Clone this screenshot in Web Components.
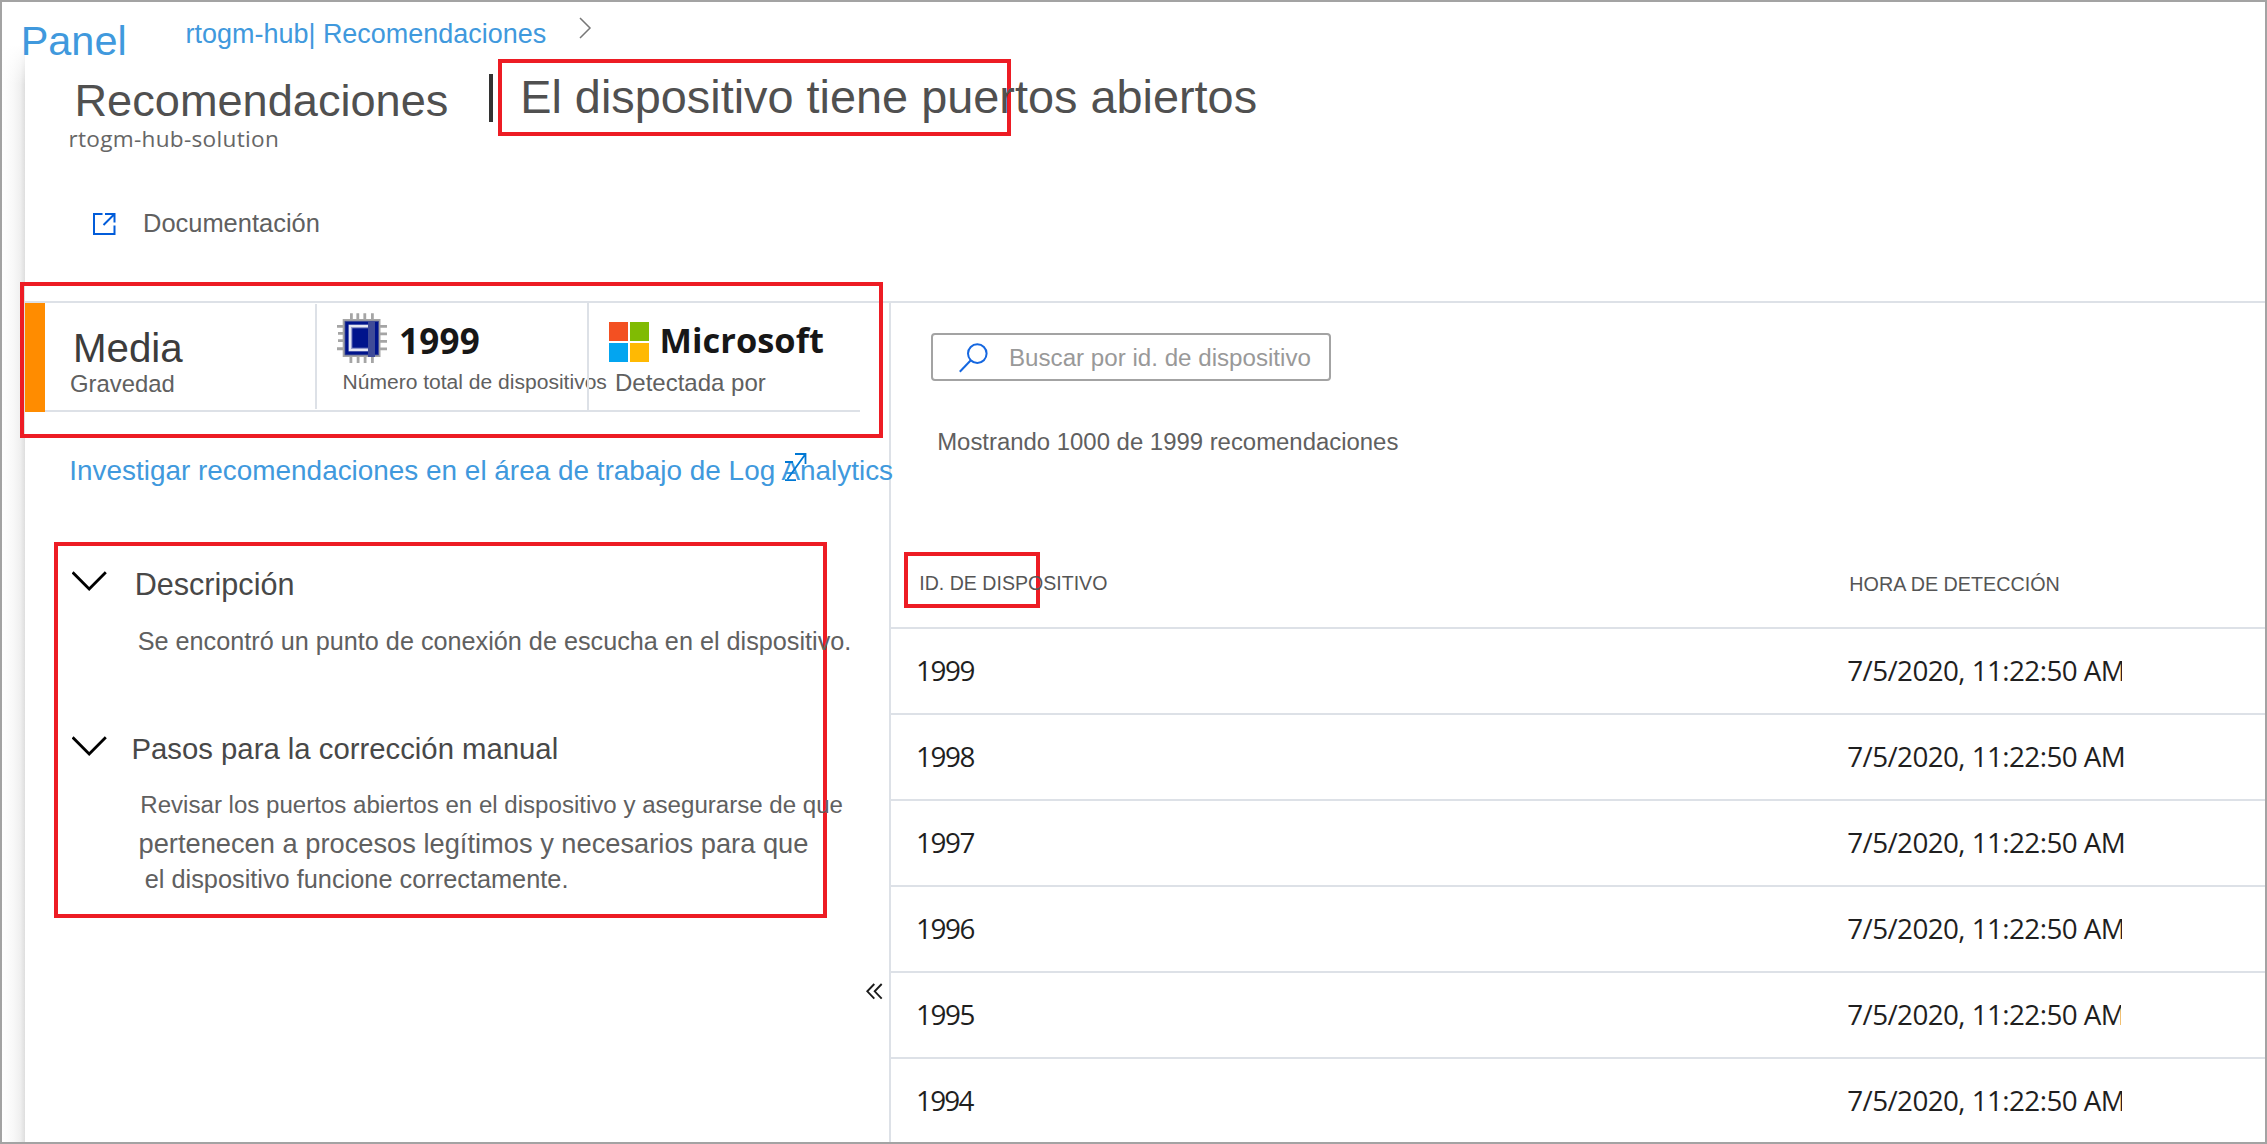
<!DOCTYPE html>
<html lang="es">
<head>
<meta charset="utf-8">
<title>Recomendaciones</title>
<style>
html, body { margin: 0; padding: 0; background: #fff; }
body { width: 2267px; height: 1144px; overflow: hidden; font-family: "Liberation Sans", Arial, sans-serif; }
</style>
</head>
<body>
<app-frame></app-frame>
<script>
const pen = document.createElement('canvas').getContext('2d');

/* One line of text whose inked width is `w`; its baseline lies `size` px below the top of its box.
   The sans face adapts its font size, the "open-sans" variant adapts its letter spacing. */
class FitText extends HTMLElement {
  connectedCallback() {
    if (this.shadowRoot) return;
    const root = this.attachShadow({ mode: 'open' });
    root.innerHTML = `<style>
      :host { display: block; flex: none; white-space: nowrap; }
      span { display: block; white-space: nowrap; }
    </style><span><slot></slot></span>`;
    const text = this.textContent;
    const w = parseFloat(this.getAttribute('w'));
    const base = parseFloat(this.getAttribute('size'));
    const open = this.hasAttribute('open-sans');
    const family = open ? '"Open Sans", "Noto Sans", sans-serif' : '"Liberation Sans", Arial, sans-serif';
    const weight = this.getAttribute('weight') || '400';
    const measure = s => { pen.font = `${weight} ${s}px ${family}`; return pen.measureText(text); };
    let size = base, m = measure(size), spacing = 0;
    let ink = m.actualBoundingBoxLeft + m.actualBoundingBoxRight;
    if (open) spacing = (w - ink) / (text.length - 1);
    else { size = base * w / ink; m = measure(size); }
    const lead = 2 * base - Math.round(m.fontBoundingBoxAscent) + Math.round(m.fontBoundingBoxDescent);
    this.style.width = w + 'px';
    const span = root.querySelector('span');
    span.style.cssText = `font:${weight} ${size}px/${lead}px ${family};letter-spacing:${spacing}px;margin-left:${m.actualBoundingBoxLeft}px`;
  }
}
customElements.define('fit-text', FitText);

const define = (tag, html) => {
  const tpl = document.createElement('template');
  tpl.innerHTML = html;
  customElements.define(tag, class extends HTMLElement {
    constructor() {
      super();
      this.attachShadow({ mode: 'open' }).append(document.importNode(tpl.content, true));
    }
  });
};

define('mark-box', `<style>
  :host { display: block; box-sizing: border-box; border: 4px solid #ed1c24; flex: none; }
</style><slot></slot>`);

define('icon-open', `<style>:host{display:block;flex:none} svg{display:block}</style>
<svg width="23" height="22" viewBox="0 0 23 22" fill="none" stroke="#015cda" stroke-width="2">
<path d="M9.5 1H1V21H21.5V12.5M12 1H21.5V9.5M21 1.5L10.5 12"/></svg>`);

define('icon-goto', `<style>:host{display:block} svg{display:block}</style>
<svg width="22" height="29" viewBox="0 0 22 29" fill="none" stroke="#0078d4" stroke-width="1.8">
<path d="M10 1H20.5V11M20.5 1L2.5 26M0 9H8M0 27.2H11"/></svg>`);

define('icon-chip', `<style>:host{display:block;flex:none} svg{display:block}</style>
<svg width="50" height="50" viewBox="7 7 50 50">
<g fill="#a5a5a5">
<path d="M20 7.3h2.8v6H20zM26.4 7.3h2.8v6h-2.8zM33.4 7.3h2.8v6h-2.8zM41 7.3h2.8v6H41z"/>
<path d="M19.5 50.5h2.8V57h-2.8zM26.7 50.5h2.8V57h-2.8zM33.7 50.5h2.8V57h-2.8zM41 50.5h2.8V57H41z"/>
<path d="M7 19h6v2.8H7zM8 26h5v2.8H8zM8 33.2h5V36H8zM7 41.2h6v3H7z"/>
<path d="M50 19h7v2.8h-7zM50 26.4h7v2.8h-7zM50 34h7v2.8h-7zM50 41.4h7v2.8h-7z"/>
<rect x="12.7" y="13" width="37.8" height="38"/></g>
<rect x="15" y="15.3" width="33.5" height="33.6" fill="#00148c" stroke="#3f4a96" stroke-width=".8"/>
<path d="M38 20.3H20.4V43.7H38" fill="none" stroke="#8f97cb" stroke-width="3.8"/>
<path d="M38 20H20V44H38" fill="none" stroke="#e4e6f2" stroke-width="2.2"/>
<rect x="38" y="15" width="7" height="36" fill="#3f4b98"/></svg>`);

define('icon-windows', `<style>
  :host { display: grid; grid-template-columns: 19px 19px; grid-template-rows: 19px 19px; gap: 2px; flex: none; }
</style><i style="background:#f35022"></i><i style="background:#80bb03"></i><i style="background:#03a5f0"></i><i style="background:#ffb903"></i>`);

define('icon-search', `<style>:host{display:block;flex:none} svg{display:block}</style>
<svg width="30" height="30" viewBox="0 0 30 30" fill="none" stroke="#1567e0" stroke-width="2">
<circle cx="18.3" cy="10.6" r="9.3"/><path d="M11.8 17.2L.8 28.8"/></svg>`);

define('icon-down', `<style>:host{display:block;flex:none} svg{display:block}</style>
<svg width="36" height="21" viewBox="0 0 36 21" fill="none" stroke="#000" stroke-width="2.8"><path d="M.6 1.3L17.2 18L33.8 1.3"/></svg>`);

define('crumb-bar', `<style>
  :host { display: flex; align-items: flex-start; height: 43px; padding-left: 21.7px; flex: none; color: #4099dd; position: relative; z-index: 1; }
  svg { display: block; margin: 15px 0 0 33.5px; }
</style>
<fit-text size="41" w="100.8" style="margin-top:12px">Panel</fit-text>
<fit-text size="27" w="359.5" style="margin:13.7px 0 0 62px">rtogm-hub| Recomendaciones</fit-text>
<svg width="13" height="22" viewBox="0 0 13 22" fill="none" stroke="#777" stroke-width="1.5"><path d="M1 1L11 11L1 21"/></svg>`);

define('blade-head', `<style>
  :host { display: block; height: 256px; flex: none; color: #505050; }
  .title { display: flex; align-items: flex-start; height: 80px; padding-left: 52.5px; }
  .bar { width: 4px; height: 48px; margin: 29px 0 0 41.5px; background: #333; }
  mark-box { width: 513px; height: 77px; margin: 14px 0 0 5.5px; padding: 4.2px 0 0 21.2px; }
  .sub { margin: 0 0 0 44.4px; color: #666; height: 83px; }
  .doc { display: flex; align-items: flex-start; padding-left: 68px; color: #606060; }
  .doc icon-open { margin-top: 5px; }
</style>
<div class="title">
  <fit-text size="45" w="369.5" style="margin-top:25.7px">Recomendaciones</fit-text>
  <div class="bar"></div>
  <mark-box><fit-text size="46.5" w="732.8">El dispositivo tiene puertos abiertos</fit-text></mark-box>
</div>
<div class="sub"><fit-text open-sans size="22.6" w="208.5">rtogm-hub-solution</fit-text></div>
<div class="doc"><icon-open></icon-open><fit-text size="25" w="174" style="margin:-.7px 0 0 29px">Documentación</fit-text></div>`);

define('stat-strip', `<style>
  :host { display: flex; height: 109px; position: relative; }
  .tone { width: 20px; background: #ff8c00; flex: none; }
  .cells { display: flex; width: 815px; box-sizing: border-box; border-bottom: 2px solid #dde1e7; }
  .cell { width: 270px; flex: none; }
  .rule { width: 2px; background: #dde1e7; flex: none; height: 105px; margin-top: 1px; }
  .rule.tall { height: 107px; margin-top: 0; }
  .row { display: flex; align-items: flex-start; height: 60px; }
  .cap { color: #606060; }
  .num { color: #171717; }
  mark-box { position: absolute; left: -5px; top: -21px; width: 863px; height: 156px; }
</style>
<div class="tone"></div>
<div class="cells">
  <div class="cell">
    <div class="row"><fit-text size="41" w="107" style="margin:18.2px 0 0 31px;color:#3c3c3c">Media</fit-text></div>
    <fit-text class="cap" size="24" w="102.5" style="margin:5px 0 0 26px">Gravedad</fit-text>
  </div>
  <div class="rule"></div>
  <div class="cell">
    <div class="row"><icon-chip style="margin:10px 0 0 20px"></icon-chip>
    <fit-text open-sans weight="700" class="num" size="35" w="77.7" style="margin:15.8px 0 0 14px">1999</fit-text></div>
    <fit-text class="cap" size="21" w="263" style="margin:5px 0 0 26.5px">Número total de dispositivos</fit-text>
  </div>
  <div class="rule tall"></div>
  <div class="cell">
    <div class="row"><icon-windows style="margin:19px 0 0 20px"></icon-windows>
    <fit-text open-sans weight="700" class="num" size="34.4" w="160.4" style="margin:15.7px 0 0 13.6px">Microsoft</fit-text></div>
    <fit-text class="cap" size="23.5" w="150" style="margin:4.5px 0 0 27px">Detectada por</fit-text>
  </div>
</div>
<mark-box></mark-box>`);

define('log-link', `<style>
  :host { display: block; position: relative; color: #4099dd; height: 36px; z-index: 1; }
  icon-goto { position: absolute; left: 714px; top: .5px; }
</style><fit-text size="27.5" w="823">Investigar recomendaciones en el área de trabajo de Log Analytics</fit-text><icon-goto></icon-goto>`);

define('fold-section', `<style>
  :host { display: block; color: #606060; }
  .head { display: flex; align-items: flex-start; color: #484848; height: 40px; }
</style><div class="head"><icon-down></icon-down><slot name="title"></slot></div><slot></slot>`);

define('detail-pane', `<style>
  :host { display: flex; flex-direction: column; width: 864px; flex: none; }
  log-link { margin: 40.5px 0 0 46.3px; flex: none; }
  .folds { width: 773px; height: 376px; margin: 53.5px 0 0 29px; padding: 25px 0 0 13.5px; }
  fold-section { height: 165px; }
  .fold { display: flex; justify-content: flex-end; margin-top: 65px; padding-right: 6px; }
</style>
<stat-strip></stat-strip>
<log-link></log-link>
<mark-box class="folds">
  <fold-section>
    <fit-text slot="title" size="29" w="156.5" style="margin:-5px 0 0 29.2px">Descripción</fit-text>
    <fit-text size="24" w="711" style="margin:14.7px 0 0 67.2px">Se encontró un punto de conexión de escucha en el dispositivo.</fit-text>
  </fold-section>
  <fold-section>
    <fit-text slot="title" size="28" w="423.5" style="margin:-5.3px 0 0 26px">Pasos para la corrección manual</fit-text>
    <fit-text size="23.5" w="702" style="margin:13.5px 0 0 69.8px">Revisar los puertos abiertos en el dispositivo y asegurarse de que</fit-text>
    <fit-text size="27" w="668" style="margin:6.8px 0 0 68px">pertenecen a procesos legítimos y necesarios para que</fit-text>
    <fit-text size="23.5" w="421.3" style="margin:3.6px 0 0 74.2px">el dispositivo funcione correctamente.</fit-text>
  </fold-section>
</mark-box>
<div class="fold"><svg width="17" height="17" viewBox="0 0 17 17" fill="none" stroke="#1b1b1b" stroke-width="1.9"><path d="M8.3 1L1.3 8.3L8.3 15.6M15.7 1L8.7 8.3L15.7 15.6"/></svg></div>`);

define('search-field', `<style>
  :host { display: flex; align-items: flex-start; box-sizing: border-box; width: 400px; height: 48px; border: 2px solid #a3a3a3; border-radius: 4px; flex: none; color: #999; }
  icon-search { margin: 8px 0 0 26px; }
</style><icon-search></icon-search><fit-text size="23.5" w="301" style="margin:7.5px 0 0 21px">Buscar por id. de dispositivo</fit-text>`);

class DeviceRow extends HTMLElement {
  connectedCallback() {
    if (this.shadowRoot) return;
    const id = this.getAttribute('device'), clip = this.getAttribute('clip');
    this.attachShadow({ mode: 'open' }).innerHTML = `<style>
      :host { display: grid; grid-template-columns: 957.2px 1fr; box-sizing: border-box; height: 86px; border-top: 2px solid #dde1e7; flex: none; align-items: start; color: #1f1f1f; }
      .id { padding: 25px 0 0 27px; }
      .time { padding-top: 25px; height: 40px; ${clip ? `overflow: hidden; width: ${clip}px;` : ''} }
    </style>
    <div class="id"><fit-text open-sans size="27.8" w="56.4">${id}</fit-text></div>
    <div class="time"><fit-text open-sans size="27.8" w="275.5">7/5/2020, 11:22:50 AM</fit-text></div>`;
  }
}
customElements.define('device-row', DeviceRow);

define('device-pane', `<style>
  :host { display: flex; flex-direction: column; flex: 1; border-left: 2px solid #dde1e7; overflow: hidden; color: #555; }
  search-field { margin: 30px 0 0 40px; }
  .count { height: 125.3px; margin: 45.7px 0 0 47.2px; flex: none; color: #606060; }
  .cols { display: flex; align-items: flex-start; height: 75px; flex: none; padding-left: 13px; }
  .cols mark-box { width: 136px; height: 56px; padding: 15.5px 0 0 12.3px; }
</style>
<search-field></search-field>
<div class="count"><fit-text size="23" w="460">Mostrando 1000 de 1999 recomendaciones</fit-text></div>
<div class="cols">
  <mark-box><fit-text size="19.5" w="187">ID. DE DISPOSITIVO</fit-text></mark-box>
  <fit-text size="20.5" w="210" style="margin:19.2px 0 0 810.3px">HORA DE DETECCIÓN</fit-text>
</div>
<device-row device="1999" clip="273.6"></device-row>
<device-row device="1998"></device-row>
<device-row device="1997"></device-row>
<device-row device="1996" clip="273.6"></device-row>
<device-row device="1995" clip="272.6"></device-row>
<device-row device="1994" clip="273.6"></device-row>`);

define('app-frame', `<style>
  :host { display: flex; flex-direction: column; box-sizing: border-box; width: 2267px; height: 1144px; border: 2px solid #a3a3a3; overflow: hidden; background: #fff; }
  .body { display: flex; height: 1097px; flex: none; }
  .shade { width: 23px; flex: none; background: linear-gradient(to bottom, #fff 0, rgba(255,255,255,0) 40px), linear-gradient(to right, #fff 0, #f8f8f8 50%, #efefef 80%, #dedede 100%); }
  .blade { display: flex; flex-direction: column; flex: 1; }
  .main { display: flex; flex: 1; border-top: 2px solid #dde1e7; }
</style>
<crumb-bar></crumb-bar>
<div class="body">
  <div class="shade"></div>
  <div class="blade">
    <blade-head></blade-head>
    <div class="main"><detail-pane></detail-pane><device-pane></device-pane></div>
  </div>
</div>`);
</script>
</body>
</html>
